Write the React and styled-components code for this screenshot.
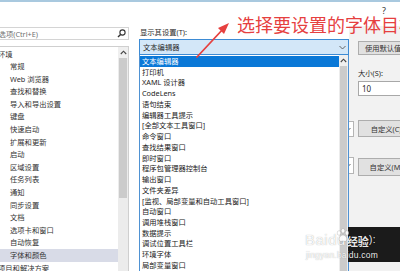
import React from "react";
import styled, { createGlobalStyle } from "styled-components";

const GlobalStyle = createGlobalStyle`
  html, body {
    margin: 0;
    padding: 0;
    background: #fff;
  }
  body {
    font-family: "Noto Sans", "Noto Sans CJK SC", sans-serif;
  }
`;

const Window = styled.div`
  position: relative;
  width: 400px;
  height: 271px;
  overflow: hidden;
  background: #fff;
  color: #2a2a2a;
  font-size: 7.3px;
  display: flex;
  flex-direction: column;
`;

const TopEdge = styled.div`
  height: 2px;
  background: #a9c9df;
`;

const TitleBar = styled.div`
  height: 24px;
  box-sizing: border-box;
  display: flex;
  justify-content: flex-end;
  padding: 2px 14px 0 0;
  font-size: 9px;
  color: #333;
`;

const Body = styled.div`
  flex: 1;
  min-height: 0;
  display: flex;
`;

const LeftPane = styled.div`
  width: 129px;
  flex-shrink: 0;
  display: flex;
  flex-direction: column;
`;

const SearchBox = styled.div`
  margin-top: 1px;
  height: 13px;
  box-sizing: border-box;
  border: 1px solid #d4d4d4;
  border-left: none;
  display: flex;
  align-items: center;
  justify-content: space-between;
  padding-right: 2px;
  color: #707070;
  overflow: hidden;
`;

const SearchText = styled.span`
  white-space: nowrap;
  margin-left: -16px;
`;

const Tree = styled.div`
  margin-top: 6px;
  flex: 1;
  display: flex;
  border-top: 1px solid #cfcfcf;
  border-right: 1px solid #cfcfcf;
  overflow: hidden;
`;

const TreeRows = styled.div`
  flex: 1;
  padding-top: 0.5px;
`;

const TreeRow = styled.div`
  height: 12.6px;
  line-height: 12.6px;
  white-space: nowrap;
  padding-left: ${(p) => (p.$child ? "10px" : "0")};
  margin-left: ${(p) => (p.$child ? "0" : "-2px")};
  background: ${(p) => (p.$selected ? "#d8dbe7" : "transparent")};
  color: #333;
`;

const ScrollTrack = styled.div`
  width: ${(p) => p.$w}px;
  flex-shrink: 0;
  display: flex;
  flex-direction: column;
  background: #ececec;
`;

const ScrollArrow = styled.div`
  height: ${(p) => p.$h}px;
  display: flex;
  align-items: center;
  justify-content: center;
  background: #efefef;
`;

const ScrollThumb = styled.div`
  height: ${(p) => (p.$h ? `${p.$h}px` : "auto")};
  flex: ${(p) => (p.$h ? "none" : "1")};
  background: #cbcbcb;
  margin: 0 1px;
`;

const RightPane = styled.div`
  flex: 1;
  min-width: 0;
  overflow: hidden;
  display: flex;
  padding-left: 10px;
  background: linear-gradient(to right, #fff 220px, #f2f2f2 220px);
`;

const MainCol = styled.div`
  width: 215px;
  flex-shrink: 0;
  display: flex;
  flex-direction: column;
`;

const Label = styled.div`
  height: 13px;
  line-height: 13px;
  padding-left: 1px;
  white-space: nowrap;
`;

const ComboWrap = styled.div`
  position: relative;
  width: 210px;
  z-index: 2;
`;

const Combo = styled.div`
  width: ${(p) => p.$w || 210}px;
  height: ${(p) => p.$h || 16}px;
  margin-top: ${(p) => p.$mt || 0}px;
  box-sizing: border-box;
  border: 1px solid ${(p) => (p.$active ? "#3d8bd4" : "#b5b5b5")};
  background: ${(p) => (p.$active ? "#d3e7f8" : "#fff")};
  display: flex;
  align-items: center;
  justify-content: space-between;
  padding: 0 2px 0 3px;
  white-space: nowrap;
`;

const DropList = styled.div`
  position: absolute;
  top: 16px;
  left: 0;
  width: 210px;
  height: 230px;
  box-sizing: border-box;
  border: 1px solid #4f92d3;
  border-top: none;
  background: #fff;
  display: flex;
`;

const DropItems = styled.div`
  flex: 1;
  padding-top: 1px;
`;

const DropItem = styled.div`
  height: 10.74px;
  line-height: 10.74px;
  padding-left: 2px;
  white-space: nowrap;
  background: ${(p) => (p.$selected ? "#0a78d7" : "transparent")};
  color: ${(p) => (p.$selected ? "#fff" : "#222")};
`;

const SideCol = styled.div`
  margin-left: 3px;
  flex-shrink: 0;
  display: flex;
  flex-direction: column;
`;

const Button = styled.div`
  width: ${(p) => p.$w}px;
  height: ${(p) => p.$h}px;
  margin-top: ${(p) => p.$mt}px;
  margin-left: 1px;
  box-sizing: border-box;
  border: 1px solid #adadad;
  background: #e1e1e1;
  display: flex;
  align-items: center;
  justify-content: center;
  white-space: nowrap;
  color: #333;
`;

const SizeLabel = styled.div`
  margin-top: 12px;
  height: 12px;
  line-height: 12px;
  padding-left: 1px;
`;

const SizeInput = styled.div`
  margin-top: 2px;
  margin-left: 1px;
  width: 60px;
  height: 15px;
  box-sizing: border-box;
  border: 1px solid #a8a8a8;
  background: #fff;
  padding-left: 3px;
  display: flex;
  align-items: center;
  font-size: 8px;
`;

const Annotation = styled.div`
  position: absolute;
  left: 237px;
  top: 13px;
  font-family: "Noto Sans CJK SC", sans-serif;
  font-size: 18px;
  line-height: 22px;
  color: #e6403f;
  white-space: nowrap;
  z-index: 5;
`;

const ArrowSvg = styled.svg`
  position: absolute;
  left: 190px;
  top: 18px;
  z-index: 5;
`;

const CaptionBox = styled.div`
  position: absolute;
  left: 348px;
  top: 227px;
  width: 52px;
  height: 35px;
  background: #1b1b1b;
  z-index: 6;
`;

const Watermark = styled.div`
  position: absolute;
  left: 305px;
  top: 230px;
  z-index: 7;
  color: rgba(255, 255, 255, 0.92);
  text-shadow: 0 0 1px rgba(0, 0, 0, 0.35);
  display: flex;
  flex-direction: column;
`;

const MarkLine = styled.div`
  display: flex;
  align-items: flex-end;
  white-space: nowrap;
  font-family: "Liberation Sans", sans-serif;
`;

const MarkBig = styled.span`
  font-size: ${(p) => p.$size || 15}px;
  line-height: 20px;
  letter-spacing: 0.5px;
`;

const MarkCjk = styled.span`
  font-family: "Noto Sans CJK SC", sans-serif;
  font-size: 11px;
  line-height: 18px;
  font-weight: 700;
  margin-left: 1px;
`;

const MarkUrl = styled.div`
  font-family: "Liberation Sans", sans-serif;
  font-size: 8.5px;
  line-height: 10px;
  padding-left: 1px;
  letter-spacing: 0.2px;
`;

const Paw = styled.svg`
  position: absolute;
  left: 30px;
  top: -2px;
`;

const Chevron = () => (
  <svg width="7" height="5" viewBox="0 0 7 5">
    <polyline points="0.5,1 3.5,4 6.5,1" fill="none" stroke="#555" strokeWidth="0.9" />
  </svg>
);

const UpCaret = () => (
  <svg width="7" height="5" viewBox="0 0 7 5">
    <polyline points="0.8,4 3.5,1.2 6.2,4" fill="none" stroke="#444" strokeWidth="1.1" />
  </svg>
);

const SearchIcon = () => (
  <svg width="9" height="9" viewBox="0 0 9 9">
    <circle cx="5.5" cy="3.5" r="2.6" fill="none" stroke="#333" strokeWidth="1.1" />
    <line x1="3.6" y1="5.4" x2="1" y2="8" stroke="#333" strokeWidth="1.4" />
  </svg>
);

const treeItems = [
  { label: "环境" },
  { label: "常规", child: true },
  { label: "Web 浏览器", child: true },
  { label: "查找和替换", child: true },
  { label: "导入和导出设置", child: true },
  { label: "键盘", child: true },
  { label: "快速启动", child: true },
  { label: "扩展和更新", child: true },
  { label: "启动", child: true },
  { label: "区域设置", child: true },
  { label: "任务列表", child: true },
  { label: "通知", child: true },
  { label: "同步设置", child: true },
  { label: "文档", child: true },
  { label: "选项卡和窗口", child: true },
  { label: "自动恢复", child: true },
  { label: "字体和颜色", child: true, selected: true },
  { label: "项目和解决方案" },
];

const dropItems = [
  "文本编辑器",
  "打印机",
  "XAML 设计器",
  "CodeLens",
  "语句结束",
  "编辑器工具提示",
  "[全部文本工具窗口]",
  "命令窗口",
  "查找结果窗口",
  "即时窗口",
  "程序包管理器控制台",
  "输出窗口",
  "文件夹差异",
  "[监视、局部变量和自动工具窗口]",
  "自动窗口",
  "调用堆栈窗口",
  "数据提示",
  "调试位置工具栏",
  "环境字体",
  "局部变量窗口",
];

export default function App() {
  return (
    <>
      <GlobalStyle />
      <Window>
        <TopEdge />
        <TitleBar>?</TitleBar>
        <Body>
          <LeftPane>
            <SearchBox>
              <SearchText>搜索选项(Ctrl+E)</SearchText>
              <SearchIcon />
            </SearchBox>
            <Tree>
              <TreeRows>
                {treeItems.map((item) => (
                  <TreeRow key={item.label} $child={item.child} $selected={item.selected}>
                    {item.label}
                  </TreeRow>
                ))}
              </TreeRows>
              <ScrollTrack $w={10}>
                <ScrollArrow $h={11}>
                  <UpCaret />
                </ScrollArrow>
                <ScrollThumb $h={140} />
              </ScrollTrack>
            </Tree>
          </LeftPane>

          <RightPane>
            <MainCol>
              <Label>显示其设置(T):</Label>
              <ComboWrap>
                <Combo $active>
                  <span>文本编辑器</span>
                  <Chevron />
                </Combo>
                <DropList>
                  <DropItems>
                    {dropItems.map((label, i) => (
                      <DropItem key={label} $selected={i === 0}>
                        {label}
                      </DropItem>
                    ))}
                  </DropItems>
                  <ScrollTrack $w={9}>
                    <ScrollArrow $h={11}>
                      <UpCaret />
                    </ScrollArrow>
                    <ScrollThumb />
                  </ScrollTrack>
                </DropList>
              </ComboWrap>
              <Combo $w={215} $h={16} $mt={66}>
                <span />
                <Chevron />
              </Combo>
              <Combo $w={215} $h={17} $mt={20}>
                <span />
                <Chevron />
              </Combo>
            </MainCol>

            <SideCol>
              <Button $w={60} $h={14} $mt={15}>使用默认值(D)</Button>
              <SizeLabel>大小(S):</SizeLabel>
              <SizeInput>10</SizeInput>
              <Button $w={62} $h={17} $mt={24}>自定义(C)...</Button>
              <Button $w={62} $h={18} $mt={21}>自定义(M)...</Button>
            </SideCol>
          </RightPane>
        </Body>

        <Annotation>选择要设置的字体目标</Annotation>
        <ArrowSvg width="45" height="45" viewBox="0 0 45 45">
          <line x1="7" y1="39" x2="34" y2="10" stroke="#e6403f" strokeWidth="1.8" strokeLinecap="round" />
          <polygon points="39,5 28,10 34,16" fill="#e6403f" />
        </ArrowSvg>

        <CaptionBox />
        <Watermark>
          <Paw width="16" height="15" viewBox="0 0 16 15">
            <ellipse cx="4" cy="5" rx="1.8" ry="2.3" fill="rgba(255,255,255,0.9)" stroke="rgba(0,0,0,0.25)" strokeWidth="0.5" />
            <ellipse cx="8" cy="2.8" rx="1.8" ry="2.3" fill="rgba(255,255,255,0.9)" stroke="rgba(0,0,0,0.25)" strokeWidth="0.5" />
            <ellipse cx="12" cy="5" rx="1.8" ry="2.3" fill="rgba(255,255,255,0.9)" stroke="rgba(0,0,0,0.25)" strokeWidth="0.5" />
            <path d="M8 7 C5 7 3.5 10.5 4.5 12.5 C5.5 14 7 13 8 13 C9 13 10.5 14 11.5 12.5 C12.5 10.5 11 7 8 7 Z" fill="rgba(255,255,255,0.9)" stroke="rgba(0,0,0,0.25)" strokeWidth="0.5" />
          </Paw>
          <MarkLine>
            <MarkBig>Bai</MarkBig>
            <MarkBig>du</MarkBig>
            <MarkCjk>经验</MarkCjk>
            <MarkBig $size={10}>):</MarkBig>
          </MarkLine>
          <MarkUrl>jingyan.baidu.com</MarkUrl>
        </Watermark>
      </Window>
    </>
  );
}
